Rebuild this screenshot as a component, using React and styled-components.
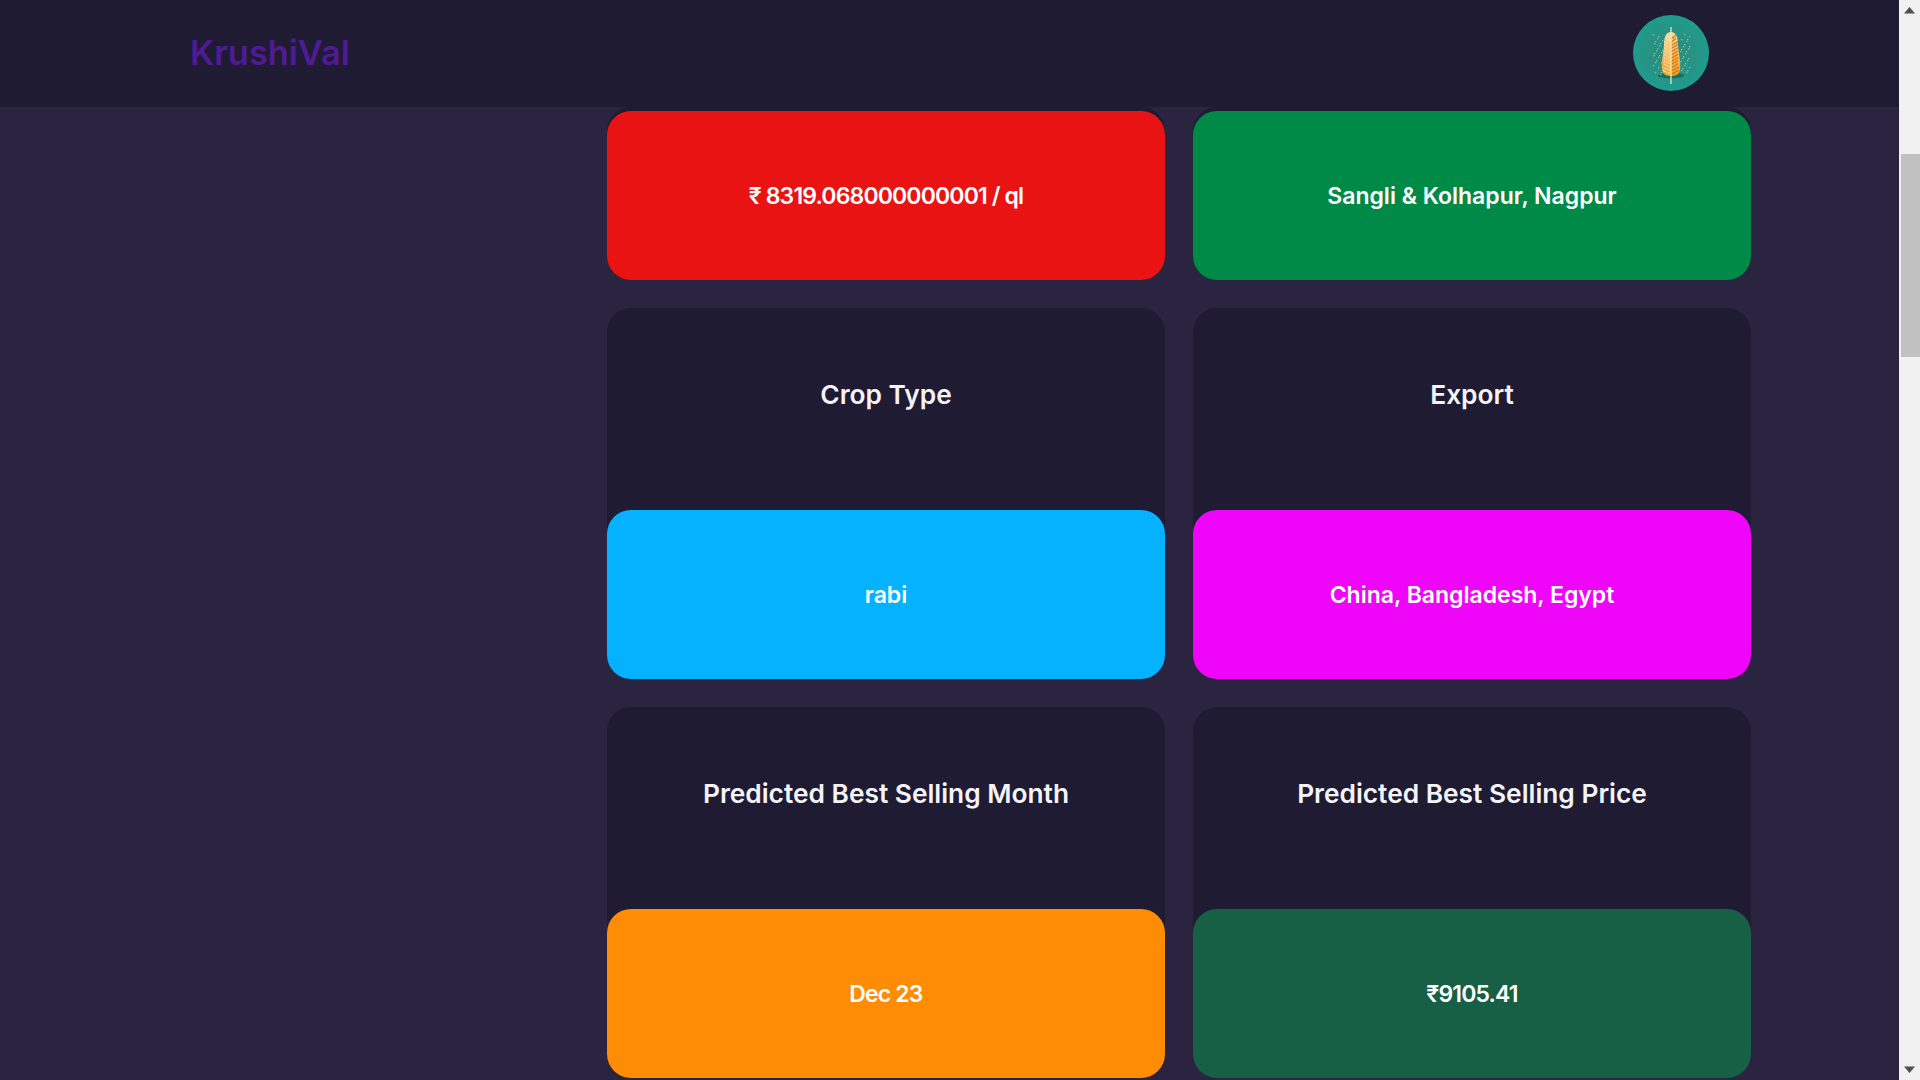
import styled, { createGlobalStyle } from 'styled-components'

const GlobalStyle = createGlobalStyle`
  html, body {
    margin: 0;
    padding: 0;
    overflow: hidden;
    background: #2a2440;
    font-family: 'Inter', 'Liberation Sans', sans-serif;
  }
`

const Screen = styled.div`
  display: flex;
  height: 100vh;
  overflow: hidden;
`

const Page = styled.div`
  flex: 1;
  min-width: 0;
  display: flex;
  flex-direction: column;
`

const Header = styled.header`
  height: 107px;
  flex: none;
  display: flex;
  align-items: center;
  justify-content: space-between;
  padding: 0 190px;
  background: #1e1b32;
`

const Logo = styled.div`
  padding-bottom: 2px;
  font-size: 34.4px;
  font-weight: 600;
  color: #4f1a93;
`

const Avatar = styled.div`
  width: 76px;
  height: 76px;
  margin-bottom: 1px;
  border-radius: 50%;
  overflow: hidden;
`

const Grid = styled.main`
  display: grid;
  grid-template-columns: 558px 558px;
  gap: 28px;
  padding: 0 148px 0 607px;
`

const Card = styled.section`
  display: flex;
  flex-direction: column;
  padding-top: ${(p) => (p.$clipped ? '4px' : '0')};
  border-radius: 24px;
  background: #1e1b32;
`

const Title = styled.h2`
  height: 202px;
  margin: 0;
  padding-top: 61px;
  box-sizing: border-box;
  font-size: 26.3px;
  font-weight: 600;
  line-height: 52px;
  text-align: center;
  color: #f4f4f8;
`

const Value = styled.div`
  height: 169px;
  display: flex;
  align-items: center;
  justify-content: center;
  border-radius: 24px;
  background: ${(p) => p.$color};
  font-size: 23px;
  font-weight: 600;
  letter-spacing: ${(p) => (p.$numeric ? '-0.85px' : '0')};
  color: #fff;
`

const ScrollTrack = styled.div`
  width: 21px;
  flex: none;
  display: flex;
  flex-direction: column;
  background: #f1f1f1;
`

const ArrowBox = styled.div`
  height: 21px;
  flex: none;
  display: flex;
  align-items: center;
  justify-content: center;
`

const ThumbSlot = styled.div`
  flex: 1;
  padding: 133px 0 0 2px;
`

const Thumb = styled.div`
  height: 203px;
  background: #c1c1c1;
`

const WheatIcon = () => {
  const kernels = []
  for (let row = 0; row < 12; row++) {
    const y = 21 + row * 3.2
    const half = row < 2 ? 5 : row > 9 ? 8 : 7
    kernels.push(
      <path key={`l${row}`} d={`M38 ${y + 3}L${38 - half} ${y - 1}`} stroke="#fbe3b4" strokeWidth="1" />,
      <path key={`r${row}`} d={`M38 ${y + 3}L${38 + half} ${y - 1}`} stroke="#d96f0c" strokeWidth="1.1" />
    )
  }

  // pale speckles scattered around the ear
  const specks = []
  for (let i = 0; i < 90; i++) {
    const x = 20 + ((i * 17) % 37)
    const y = 19 + ((i * 23) % 41)
    if (x > 29 && x < 47) continue
    specks.push(<rect key={i} x={x} y={y} width="1.3" height="1.3" fill="#bfe0c8" opacity="0.6" />)
  }

  return (
    <svg width="76" height="76" viewBox="0 0 76 76">
      <defs>
        <radialGradient id="tealBg" cx="50%" cy="50%" r="50%">
          <stop offset="0%" stopColor="#2f8a7b" />
          <stop offset="70%" stopColor="#259585" />
          <stop offset="100%" stopColor="#1e9c8e" />
        </radialGradient>
        <linearGradient id="ear" x1="0" y1="0" x2="0" y2="1">
          <stop offset="0%" stopColor="#f8d79c" />
          <stop offset="100%" stopColor="#ee9f28" />
        </linearGradient>
      </defs>
      <rect width="76" height="76" fill="url(#tealBg)" />
      <ellipse cx="38" cy="60.5" rx="13" ry="3" fill="#17705f" />
      {specks}
      <path d="M38 17C33 17 31 22 31 30C30 40 28 48 29 55C30 60 34 61 38 61C42 61 46 60 47 55C48 48 46 40 45 30C45 22 43 17 38 17Z" fill="url(#ear)" />
      {kernels}
      <path d="M38 12V69" stroke="#f8efb0" strokeWidth="1.2" />
    </svg>
  )
}

const cards = [
  { value: '₹ 8319.068000000001 / ql', color: '#ea1313', numeric: true },
  { value: 'Sangli & Kolhapur, Nagpur', color: '#008a47' },
  { title: 'Crop Type', value: 'rabi', color: '#05b2ff' },
  { title: 'Export', value: 'China, Bangladesh, Egypt', color: '#ef05f7' },
  { title: 'Predicted Best Selling Month', value: 'Dec 23', color: '#ff8c05', numeric: true },
  { title: 'Predicted Best Selling Price', value: '₹9105.41', color: '#175f45', numeric: true },
]

const App = () => {
  return (
    <Screen>
      <GlobalStyle />
      <Page>
        <Header>
          <Logo>KrushiVal</Logo>
          <Avatar>
            <WheatIcon />
          </Avatar>
        </Header>
        <Grid>
          {cards.map((card) => (
            <Card key={card.value} $clipped={!card.title}>
              {card.title && <Title>{card.title}</Title>}
              <Value $color={card.color} $numeric={card.numeric}>{card.value}</Value>
            </Card>
          ))}
        </Grid>
      </Page>
      <ScrollTrack>
        <ArrowBox>
          <svg width="11" height="7" viewBox="0 0 11 7"><path d="M5.5 0L11 6.5H0Z" fill="#505050" /></svg>
        </ArrowBox>
        <ThumbSlot>
          <Thumb />
        </ThumbSlot>
        <ArrowBox>
          <svg width="11" height="7" viewBox="0 0 11 7"><path d="M5.5 7L0 .5H11Z" fill="#505050" /></svg>
        </ArrowBox>
      </ScrollTrack>
    </Screen>
  )
}

export default App
